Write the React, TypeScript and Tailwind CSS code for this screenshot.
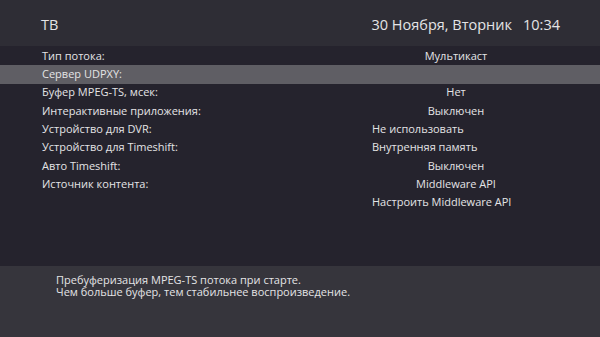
import React from "react";

type Row = { label: string; value?: string; align?: "center" | "left"; active?: boolean };

const rows: Row[] = [
  { label: "Тип потока:", value: "Мультикаст", align: "center" },
  { label: "Сервер UDPXY:", value: "", active: true },
  { label: "Буфер MPEG-TS, мсек:", value: "Нет", align: "center" },
  { label: "Интерактивные приложения:", value: "Выключен", align: "center" },
  { label: "Устройство для DVR:", value: "Не использовать", align: "left" },
  { label: "Устройство для Timeshift:", value: "Внутренняя память", align: "left" },
  { label: "Авто Timeshift:", value: "Выключен", align: "center" },
  { label: "Источник контента:", value: "Middleware API", align: "center" },
  { label: "", value: "Настроить Middleware API", align: "left" },
];

export default function App() {
  return (
    <div
      className="w-[600px] h-[337px] flex flex-col overflow-hidden text-[#e4e4e6]"
      style={{ fontFamily: '"Open Sans", "Noto Sans", sans-serif' }}
    >
      <div className="h-[46px] shrink-0 bg-[#2e2d35] flex items-center pt-[3px] pl-[41px] pr-[40px] text-[14.5px]">
        <div className="flex-1">ТВ</div>
        <div className="flex gap-[11px]">
          <span>30 Ноября, Вторник</span>
          <span>10:34</span>
        </div>
      </div>
      <div className="flex-1 bg-[#25232d] pt-[1px] flex flex-col text-[11px]">
        {rows.map((r, i) => (
          <div
            key={i}
            className={
              "h-[18.3px] flex items-center " + (r.active ? "bg-[#5f5e64]" : "")
            }
          >
            <div className="w-[372px] pl-[42px] shrink-0">{r.label}</div>
            {r.align === "center" ? (
              <div className="w-[168px] text-center">{r.value}</div>
            ) : (
              <div>{r.value}</div>
            )}
          </div>
        ))}
      </div>
      <div className="h-[71px] shrink-0 bg-[#36353c] pl-[56px] pt-[8px] text-[11px] leading-[12px] flex flex-col gap-[0px]">
        <div>Пребуферизация MPEG-TS потока при старте.</div>
        <div>Чем больше буфер, тем стабильнее воспроизведение.</div>
      </div>
    </div>
  );
}
